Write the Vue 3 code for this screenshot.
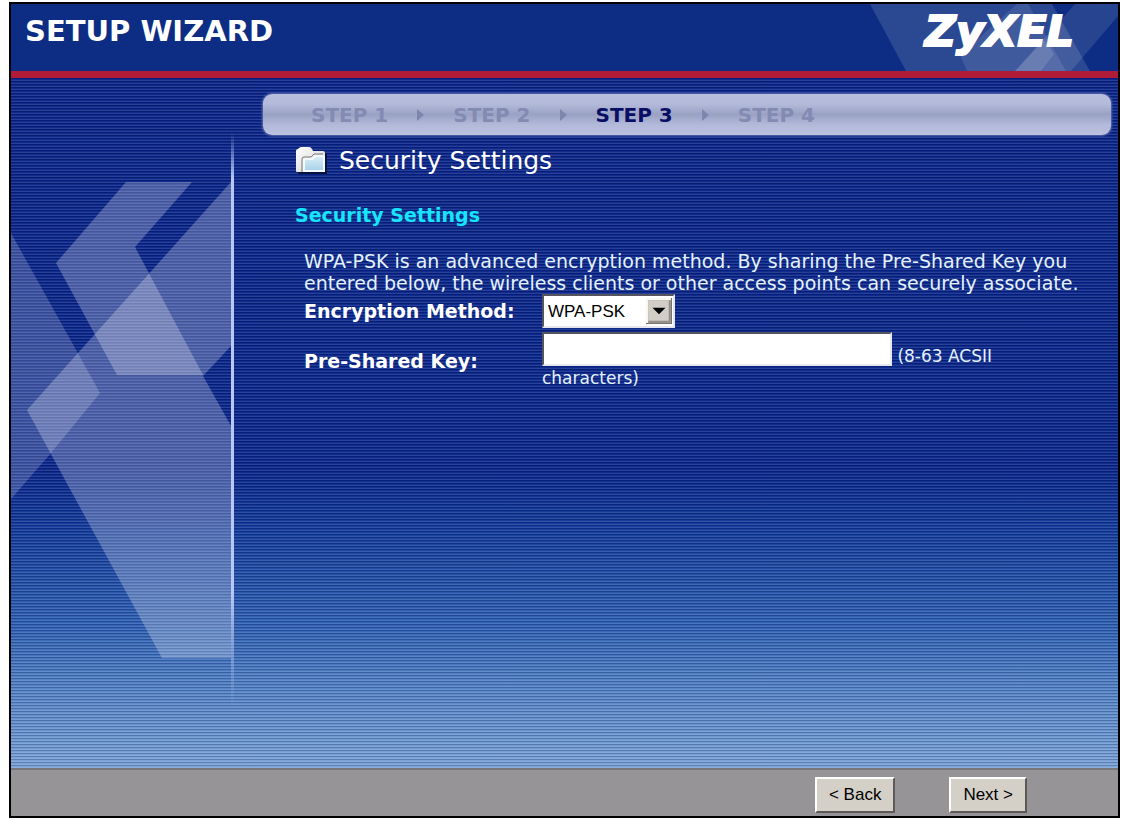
<script setup>
import { ref } from 'vue'

const steps = ['STEP 1', 'STEP 2', 'STEP 3', 'STEP 4']
const current = 2
const method = ref('WPA-PSK')
const key = ref('')
</script>

<template>
  <div class="wizard">
    <header class="top">
      <h1>SETUP WIZARD</h1>
      <svg class="top-art" viewBox="0 0 248 67" aria-hidden="true">
        <g fill="#fff">
          <path d="M0 0H182L220 67H36Z" fill-opacity=".13" />
          <path d="M147 0H158L196 67H97L90 51Z" fill-opacity=".1" />
          <path d="M145 67L205 0H248V12L201 67Z" fill-opacity=".11" />
          <path d="M145 67L174 36L184 50L171 67Z" fill-opacity=".12" />
        </g>
      </svg>
      <span class="brand">ZyXEL</span>
    </header>

    <main class="body">
      <aside class="side">
        <svg class="side-art" viewBox="0 0 220 480" aria-hidden="true">
          <g fill="#fff" fill-opacity=".25">
            <path d="M115 0H181L124 65L192 193H106L45 81Z" />
            <path d="M220 0V164L192 194L220 244V476H151L16 228Z" />
            <path d="M0 51L89 211L40 271L0 317Z" fill-opacity=".19" />
          </g>
        </svg>
      </aside>
      <section class="content">
        <ol class="steps">
          <li v-for="(s, i) in steps" :key="s" :class="{ on: i === current }">
            <span>{{ s }}</span>
            <svg v-if="i < steps.length - 1" viewBox="0 0 7 12" aria-hidden="true"><path d="M0 0L7 6L0 12Z" fill="#7e86ae" /></svg>
          </li>
        </ol>

        <h2>
          <svg class="folder" viewBox="0 0 32 28" aria-hidden="true">
            <defs>
              <linearGradient id="back" x1="0" y1="0" x2="1" y2="1"><stop offset="0" stop-color="#fff" /><stop offset="1" stop-color="#cfcfcf" /></linearGradient>
              <linearGradient id="front" x1="0" y1="0" x2="0" y2="1"><stop offset="0" stop-color="#d9edf6" /><stop offset="1" stop-color="#a9d3e8" /></linearGradient>
            </defs>
            <path d="M31 6V26H3" fill="none" stroke="#07143f" stroke-width="2" />
            <path d="M1 4Q1 2 3 2L4 1Q5 0 7 0H14Q16 0 17 2L18 4H28Q30 4 30 6V25H2Q1 25 1 24Z" fill="url(#back)" />
            <path d="M7 25V12Q7 10 9 10H15Q17 10 18 8L19 7H28" fill="none" stroke="#777" />
            <path d="M8 25V13Q8 11 10 11H16Q18 11 19 9Q20 8 21 8H28Q30 8 30 10V25Z" fill="#f4fafc" />
            <path d="M10 23V14Q10 13 11 13H17Q19 13 20 11L21 10H27Q28 10 28 11V23Z" fill="url(#front)" />
          </svg>
          Security Settings
        </h2>
        <h3>Security Settings</h3>

        <form class="form" @submit.prevent>
          <p>WPA-PSK is an advanced encryption method. By sharing the Pre-Shared Key you entered below, the wireless clients or other access points can securely associate.</p>
          <div class="row">
            <label for="method">Encryption Method:</label>
            <div class="pick">
              <select id="method" v-model="method"><option>WPA-PSK</option></select>
              <svg class="arrow" viewBox="0 0 24 24" aria-hidden="true">
                <path d="M0 0H24V24H0Z" fill="#77736c" />
                <path d="M0 0H23V23H0Z" fill="#f8f6f0" />
                <path d="M2 2H23V23H2Z" fill="#918d86" />
                <path d="M2 2H21V21H2Z" fill="#d2cec7" />
                <path d="M6 9H18L12 15Z" fill="#000" />
              </svg>
            </div>
          </div>
          <div class="row key">
            <label for="key">Pre-Shared Key:</label>
            <div class="field"><input id="key" v-model="key" type="text"> (8-63 ACSII characters)</div>
          </div>
        </form>
      </section>
    </main>

    <footer class="foot">
      <button type="button">&lt; Back</button>
      <button type="button">Next &gt;</button>
    </footer>
  </div>
</template>

<style>
body {
  background: #fff;
}
</style>

<style scoped>
.wizard {
  display: flex;
  flex-direction: column;
  box-sizing: border-box;
  min-height: 816px;
  margin: 2px 1px 2px 9px;
  border: 2px solid #000;
  color: #e4f2ff;
  font-family: "DejaVu Sans", Verdana, sans-serif;
}
.top {
  position: relative;
  display: flex;
  justify-content: space-between;
  align-items: flex-start;
  height: 67px;
  border-bottom: 7px solid #b01b38;
  background: #0c2d83;
}
h1 {
  margin: 0;
  padding: 12px 0 0 14px;
  color: #fff;
  font-size: 29px;
  line-height: 30px;
}
.top-art {
  position: absolute;
  top: 0;
  right: 0;
  width: 248px;
  height: 67px;
}
.brand {
  position: relative;
  margin-right: 44px;
  color: #fff;
  font-size: 43px;
  font-style: italic;
  font-weight: bold;
  line-height: 54px;
  -webkit-text-stroke: 2px #fff;
}
.body {
  flex: 1;
  display: flex;
  background:
    repeating-linear-gradient(rgba(0, 0, 60, .22) 0 1px, rgba(255, 255, 255, .03) 1px 2px, rgba(255, 255, 255, .13) 2px 3px),
    linear-gradient(#082487 0, #08268a 57%, #123c9a 66%, #2f62b3 80%, #5585c6 89%, #7aa3d6 100%);
}
.side {
  position: relative;
  flex: 0 0 223px;
  padding-top: 104px;
}
.side::after {
  content: "";
  position: absolute;
  top: 55px;
  right: 0;
  width: 3px;
  height: 575px;
  background: linear-gradient(rgba(190, 205, 250, 0), #b8c8f6 8%, #b8c8f6 80%, rgba(190, 205, 250, 0));
}
.side-art {
  display: block;
  width: 220px;
  height: 480px;
}
.content {
  flex: 1;
  min-width: 0;
  padding: 16px 7px 0 29px;
}
.steps {
  display: flex;
  align-items: center;
  height: 41px;
  margin: 0;
  padding: 0 0 0 48px;
  border-radius: 9px;
  background: linear-gradient(#b9c0df, #b2b9d9 25%, #9aa2c4 50%, #b2b9d9 75%, #bcc3e1);
  box-shadow: 0 0 2px 1px #5c6db0;
  list-style: none;
}
li {
  display: flex;
  align-items: center;
  color: #838bb3;
  font-size: 20px;
  font-weight: bold;
  line-height: 24px;
}
li.on {
  color: #0a0f66;
}
li svg {
  width: 7px;
  height: 12px;
  margin: 0 29px;
}
h2 {
  display: flex;
  align-items: center;
  gap: 12px;
  margin: 12px 0 0 32px;
  color: #fff;
  font-size: 25px;
  font-weight: normal;
  line-height: 28px;
}
.folder {
  width: 32px;
  height: 28px;
}
h3 {
  margin: 30px 0 0 32px;
  color: #16e6fb;
  font-size: 19px;
  line-height: 20px;
}
.form {
  margin: 25px 0 0 41px;
}
p {
  margin: 0;
  font-size: 19px;
  line-height: 22px;
}
.row {
  display: flex;
  align-items: center;
}
label {
  flex: 0 0 238px;
  color: #fff;
  font-size: 19px;
  font-weight: bold;
}
.pick {
  position: relative;
  width: 133px;
}
select,
input {
  box-sizing: border-box;
  height: 34px;
  border: 2px solid;
  border-color: #55555f #e6e6ee #e6e6ee #55555f;
  border-radius: 0;
  background: #fff;
}
select {
  display: block;
  width: 100%;
  padding: 0 4px;
  appearance: none;
  color: #000;
  font: 17px "Liberation Sans", sans-serif;
}
.arrow {
  position: absolute;
  top: 4px;
  right: 3px;
  width: 26px;
  height: 26px;
  pointer-events: none;
}
.key {
  margin-top: 4px;
}
.field {
  max-width: 500px;
  font-size: 17px;
  line-height: 22px;
}
input {
  width: 350px;
  vertical-align: text-bottom;
}
.foot {
  display: flex;
  justify-content: flex-end;
  gap: 54px;
  padding: 7px 91px 3px 0;
  border-top: 2px solid #77767a;
  background: #969496;
}
button {
  height: 36px;
  padding: 0 12px;
  border: 2px solid;
  border-color: #fff #5c5a58 #5c5a58 #fff;
  background: #d4d0c8;
  color: #000;
  font: 17px "Liberation Sans", sans-serif;
}
</style>
